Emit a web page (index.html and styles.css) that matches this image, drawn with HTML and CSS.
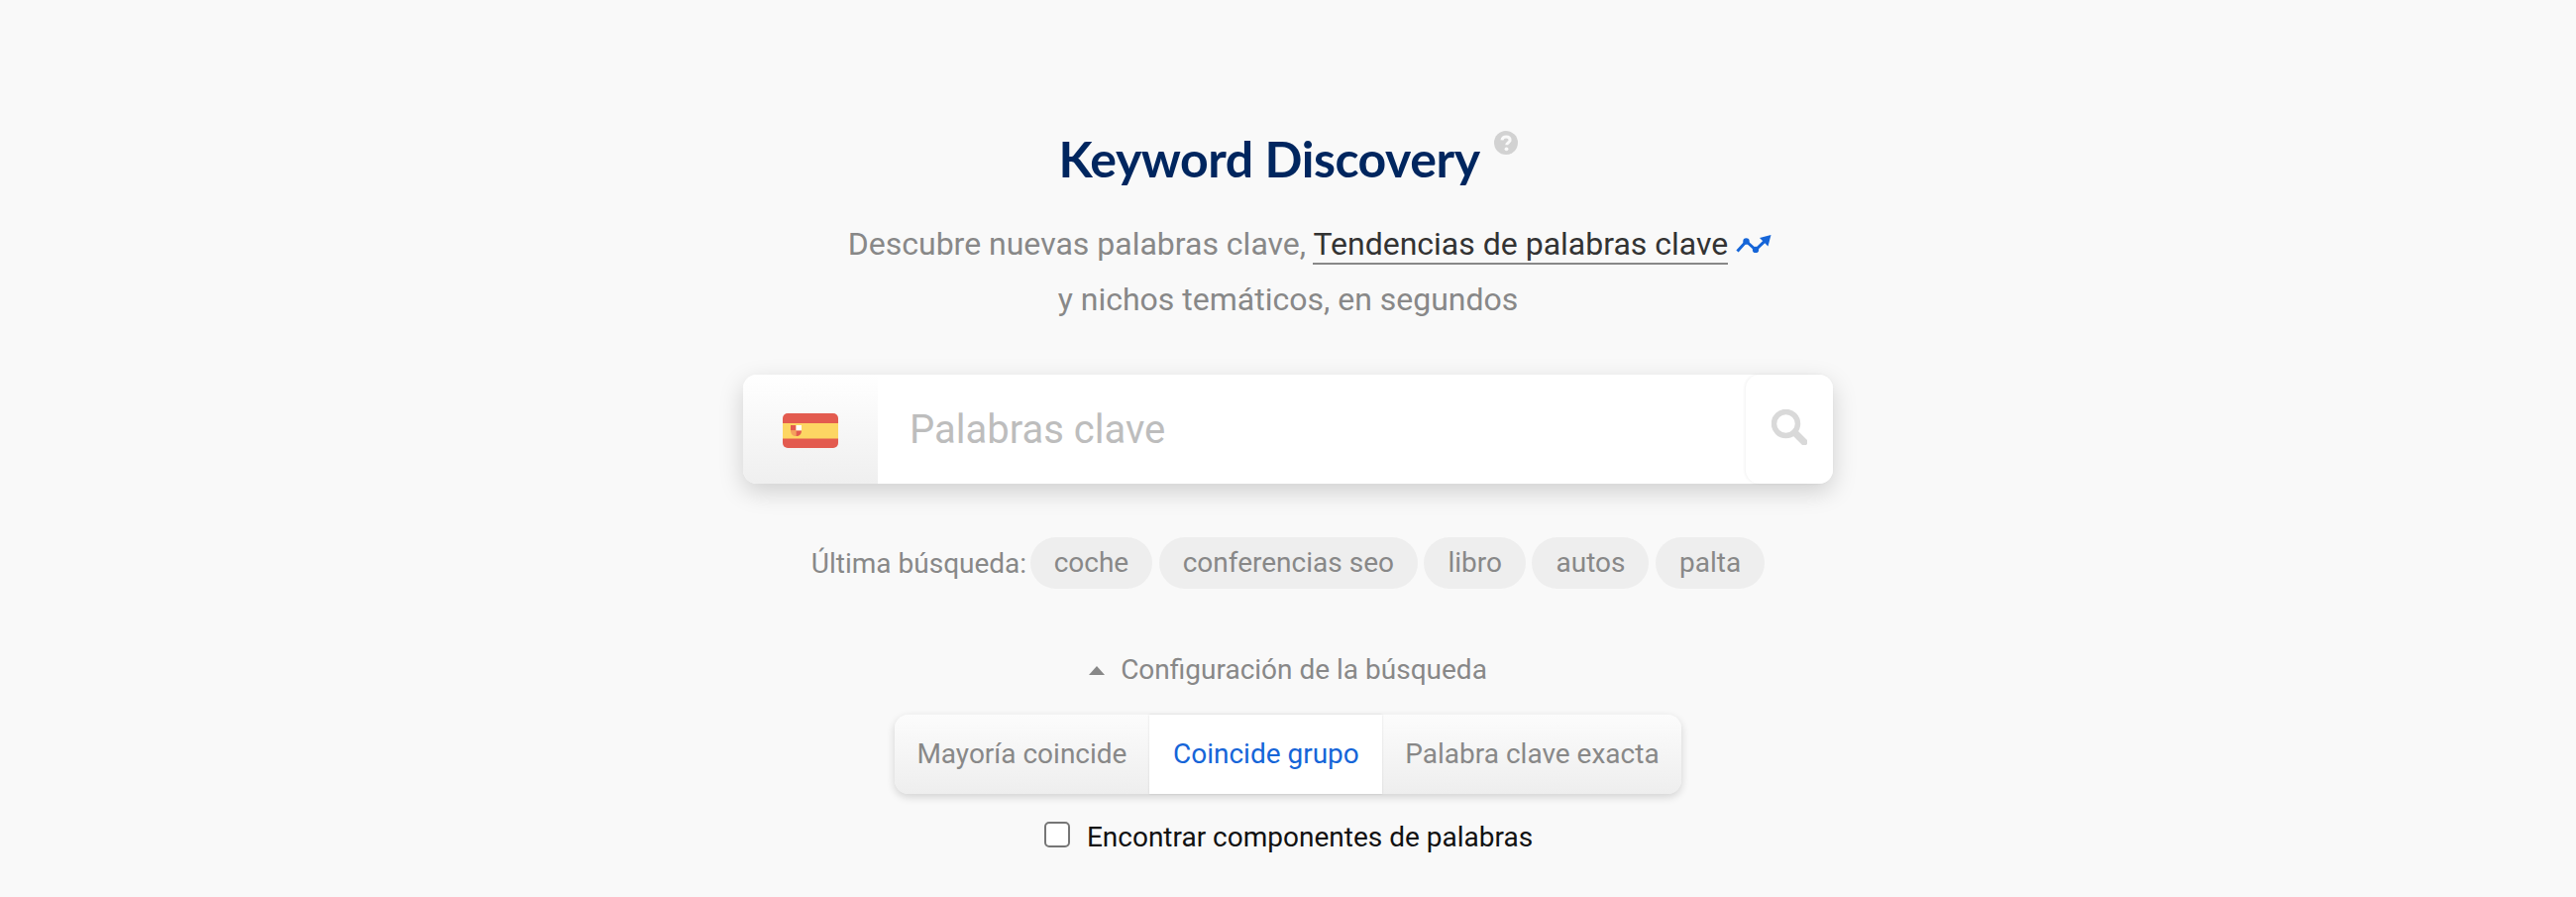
FILE: index.html
```html
<!DOCTYPE html>
<html lang="es">
<head>
<meta charset="utf-8">
<title>Keyword Discovery</title>
<link rel="stylesheet" href="styles.css">
</head>
<body>
<main class="page">
  <h1 class="title">Keyword Discovery<svg class="help" viewBox="0 0 24 24"><circle cx="12" cy="12" r="12" fill="#d2d2d2"/><path d="M8 9.4c.3-2.3 2-3.4 4.1-3.4 2.300 0 4 1.300 4 3.300 0 2.800-3.400 2.700-3.400 5" fill="none" stroke="#f9f9f9" stroke-width="3"/><circle cx="12.500" cy="18.300" r="1.900" fill="#f9f9f9"/></svg></h1>
  <p class="subtitle">Descubre nuevas palabras clave, <a class="trend-link">Tendencias de palabras clave<svg class="trend" viewBox="0 0 36 18"><path d="M1.500 16.500 10.500 6.500 20 15 29.500 6" fill="none" stroke="#1565d8" stroke-width="3"/><circle cx="10.500" cy="6.500" r="3.200" fill="#1565d8"/><circle cx="20" cy="15" r="3.200" fill="#1565d8"/><path d="M35.500 0 24 3 32.500 11.500z" fill="#1565d8"/></svg></a><br>y nichos temáticos, en segundos</p>
  <form class="search">
    <div class="country">
      <svg class="flag" viewBox="0 0 56 35"><rect width="56" height="35" rx="5" fill="#e35b4f"/><rect y="10" width="56" height="15.500" fill="#fdd663"/><path d="M8 12h5.500v5.500H8z" fill="#e35b4f"/><path d="M13.500 12H19v5.500h-5.500z" fill="#fff"/><path d="M8 17.500h5.500V23C10 23 8 21 8 17.500z" fill="#f4a15d"/><path d="M13.500 17.500H19C19 21 17 23 13.500 23z" fill="#e35b4f"/></svg>
    </div>
    <input class="query" type="text" placeholder="Palabras clave">
    <button class="go" type="button" aria-label="Buscar"><svg class="magnifier" viewBox="0 0 36 36"><circle cx="14.500" cy="14.500" r="12" fill="none" stroke="#d9d9d9" stroke-width="5.500"/><path d="M23.500 23.500 33 33" stroke="#d9d9d9" stroke-width="7" stroke-linecap="round"/></svg></button>
  </form>
  <div class="recent">
    <span class="recent-label">Última búsqueda:</span>
    <span class="chip">coche</span>
    <span class="chip">conferencias seo</span>
    <span class="chip">libro</span>
    <span class="chip">autos</span>
    <span class="chip">palta</span>
  </div>
  <div class="settings"><span class="caret"></span>Configuración de la búsqueda</div>
  <div class="modes">
    <button class="mode" type="button">Mayoría coincide</button>
    <button class="mode active" type="button">Coincide grupo</button>
    <button class="mode" type="button">Palabra clave exacta</button>
  </div>
  <label class="components"><input class="check" type="checkbox"><span class="components-text">Encontrar componentes de palabras</span></label>
</main>
</body>
</html>
```
FILE: styles.css
```css
* { box-sizing: border-box; }
html, body { margin: 0; height: 100%; overflow: hidden; }
body { background: #f9f9f9; font-family: Roboto, sans-serif; color: #888; }
.page { display: flex; flex-direction: column; align-items: center; padding-top: 130px; }
.title { margin: 0; font-family: Lato, sans-serif; font-weight: 700; font-size: 50px; letter-spacing: -0.45px; line-height: 60px; color: #00265f; display: flex; align-items: flex-start; }
.help { width: 24px; height: 24px; margin: 2px 0 0 14px; }
.subtitle { margin: 28px 0 1px; font-size: 32px; line-height: 56px; text-align: center; }
.trend-link { position: relative; color: #333; border-bottom: 2px solid #888; }
.trend { position: absolute; left: calc(100% + 8px); top: 10px; width: 36px; height: 18px; }
.search { margin-top: 47px; width: 1100px; height: 110px; display: flex; background: #fff; border-radius: 14px; box-shadow: 0 8px 24px rgba(0,0,0,.17); }
.country { width: 136px; display: flex; align-items: center; justify-content: center; border-radius: 14px 0 0 14px; background: linear-gradient(#fff, #efefef); }
.flag { width: 56px; height: 35px; margin-top: 3px; }
.query { flex: 1; min-width: 0; border: 0; outline: 0; background: transparent; padding: 0 32px; font-family: Roboto, sans-serif; font-size: 40px; color: #333; }
.query::placeholder { color: #bdbdbd; opacity: 1; }
.go { width: 88px; padding: 0; border: 0; background: #fff; border-radius: 14px; box-shadow: -1px 0 3px rgba(0,0,0,.06); display: flex; align-items: center; justify-content: center; }
.magnifier { width: 36px; height: 36px; margin-top: -4px; }
.recent { margin-top: 54px; height: 52px; display: flex; align-items: center; gap: 6.5px; font-size: 28px; }
.recent-label { margin-right: -3px; }
.chip { height: 52px; line-height: 52px; padding: 0 24px; border-radius: 26px; background: #eee; }
.settings { margin-top: 66px; height: 32px; line-height: 32px; display: flex; align-items: center; font-size: 28px; }
.caret { width: 0; height: 0; margin-right: 16px; border-left: 8px solid transparent; border-right: 8px solid transparent; border-bottom: 9px solid #888; }
.modes { margin-top: 29px; height: 80px; display: flex; border-radius: 14px; box-shadow: 0 3px 8px rgba(0,0,0,.16); }
.mode { height: 80px; padding: 0 23px 2px; border: 0; font-family: Roboto, sans-serif; font-size: 28px; color: #888; background: linear-gradient(#fcfcfc, #eee); }
.mode:first-child { padding-left: 22.5px; border-radius: 14px 0 0 14px; }
.mode:last-child { padding-right: 22.5px; border-radius: 0 14px 14px 0; }
.mode.active { padding: 0 23.5px 2px; background: #fff; color: #1565d8; box-shadow: 0 0 2px rgba(0,0,0,.12); position: relative; }
.components { margin-top: 25px; display: flex; align-items: center; font-size: 28px; line-height: 26px; color: #111; }
.components-text { padding-top: 6px; }
.check { appearance: none; width: 26px; height: 26px; margin: 0 17px 0 1px; background: #fff; border: 2px solid #767676; border-radius: 5px; }
```
